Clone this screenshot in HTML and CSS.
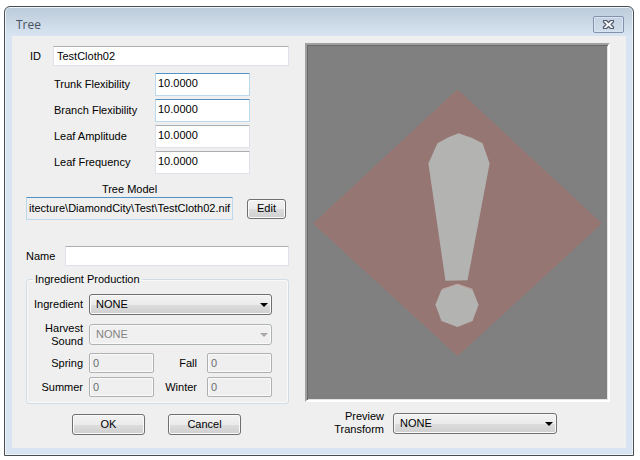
FILE: index.html
```html
<!DOCTYPE html>
<html lang="en">
<head>
<meta charset="utf-8">
<title>Tree</title>
<link rel="stylesheet" href="styles.css">
</head>
<body>
<main class="window">
  <header class="titlebar">
    <h1 class="title">Tree</h1>
    <button class="close" type="button" aria-label="Close">
      <svg width="13" height="11" viewBox="0 0 13 11" aria-hidden="true"><path d="M1.500 1.500h3l2 2 2-2h3v1.500l-2.500 2.500 2.500 2.500v1.500h-3l-2-2-2 2h-3V8L4 5.500 1.500 3z" fill="#fbfbfb" stroke="#525b70" stroke-width="1.200" stroke-linejoin="round"/></svg>
    </button>
  </header>
  <form class="client">
    <div class="left">
      <div class="row id-row">
        <label for="id">ID</label>
        <input class="text" id="id" type="text" value="TestCloth02">
      </div>
      <div class="flex-fields">
        <label for="trunk">Trunk Flexibility</label>
        <input class="text tall focus" id="trunk" type="text" value="10.0000">
        <label for="branch">Branch Flexibility</label>
        <input class="text tall focus" id="branch" type="text" value="10.0000">
        <label for="amp">Leaf Amplitude</label>
        <input class="text tall" id="amp" type="text" value="10.0000">
        <label for="freq">Leaf Frequency</label>
        <input class="text tall" id="freq" type="text" value="10.0000">
      </div>
      <label class="model-label" for="model">Tree Model</label>
      <div class="row model-row">
        <input class="text tall focus model" id="model" type="text" readonly value="itecture\DiamondCity\Test\TestCloth02.nif">
        <button class="btn edit" type="button">Edit</button>
      </div>
      <div class="row name-row">
        <label for="name">Name</label>
        <input class="text" id="name" type="text">
      </div>
      <fieldset class="group">
        <legend>Ingredient Production</legend>
        <div class="production">
          <label for="ingredient">Ingredient</label>
          <div class="combo"><select id="ingredient"><option>NONE</option></select></div>
          <label for="sound">Harvest<br>Sound</label>
          <div class="combo off"><select id="sound" disabled><option>NONE</option></select></div>
        </div>
        <div class="seasons">
          <label for="spring">Spring</label>
          <input class="text off" id="spring" type="text" value="0" disabled>
          <label for="fall">Fall</label>
          <input class="text off" id="fall" type="text" value="0" disabled>
          <label for="summer">Summer</label>
          <input class="text off" id="summer" type="text" value="0" disabled>
          <label for="winter">Winter</label>
          <input class="text off" id="winter" type="text" value="0" disabled>
        </div>
      </fieldset>
      <div class="row actions">
        <button class="btn" type="button">OK</button>
        <button class="btn" type="button">Cancel</button>
      </div>
    </div>
    <div class="right">
      <div class="preview">
        <svg viewBox="0 0 300 354" role="img" aria-label="Model preview">
          <path d="M150 44 294 178 150 310 6 178z" fill="#957673"/>
          <path d="M151 88 164 92.500 175 98 182 118 160 234.500 138 235 121 118 130 98 141 92z" fill="#b3b4b1"/>
          <path d="M150 238 165 244 171 259 165 275 150 281 134 275 128 259 134 244z" fill="#b3b4b1"/>
          <path d="M135 243.500 150 238.500 165 243.500" fill="none" stroke="#bfa3a0"/>
        </svg>
      </div>
      <div class="row transform">
        <label for="transform">Preview<br>Transform</label>
        <div class="combo"><select id="transform"><option>NONE</option></select></div>
      </div>
    </div>
  </form>
</main>
</body>
</html>
```
FILE: styles.css
```css
* {
  box-sizing: border-box;
}

body {
  margin: 0;
  padding: 6px 6px 5px 4px;
  background: #fff;
  color: #000;
  font: 11px/13px "Liberation Sans", Arial, sans-serif;
}

input,
select,
button {
  margin: 0;
  font: inherit;
  color: inherit;
  min-width: 0;
}

label {
  white-space: nowrap;
}

.window {
  padding: 0 7px 7px;
  border: 1px solid #4a4d52;
  border-radius: 6px 6px 0 0;
  background: linear-gradient(#bccbd9, #d8e4f1 29px);
  box-shadow: inset 0 0 0 1px #edf3fa;
}

.titlebar {
  display: flex;
  justify-content: space-between;
  align-items: center;
  height: 29px;
  padding: 6px 2px 0 4px;
}

.title {
  margin: 0;
  color: #45515f;
  font: 12px/16px "Open Sans", sans-serif;
}

.close {
  display: flex;
  align-items: center;
  justify-content: center;
  width: 31px;
  height: 17px;
  padding: 0;
  border: 1px solid #8492b0;
  border-radius: 2px;
  background: linear-gradient(#c4d2e1, #d0ddeb);
  box-shadow: inset 0 0 0 1px #d9e4f0;
}

.client {
  display: grid;
  grid-template-columns: 263fr 305fr;
  gap: 16px;
  padding: 7px 16px 12px 14px;
  background: #efefef;
}

.row {
  display: flex;
  align-items: center;
}

.left {
  display: flex;
  flex-direction: column;
  padding-top: 3px;
}

.text {
  width: 100%;
  height: 20px;
  padding: 0 3px;
  border: 1px solid #dfe2ea;
  border-top-color: #abadb3;
  border-radius: 1px;
  background: #fff;
}

.text.tall {
  height: 23px;
  padding: 0 2px 4px;
}

.text.focus {
  border-color: #bbd9ee;
  border-top-color: #5193c4;
}

.text.model {
  flex: 1;
  padding: 0 0 2px 2px;
  background: #efefef;
}

.text.off {
  border-color: #b0b0b0;
  border-radius: 2px;
  background: #efefef;
  box-shadow: inset 0 0 0 1px #fafafa;
  color: #6d6d6d;
}

.id-row {
  padding-left: 4px;
}

.id-row label {
  flex: 0 0 23px;
}

.flex-fields {
  display: grid;
  grid-template-columns: 101px 95px;
  align-items: center;
  gap: 3px 0;
  margin-top: 7px;
  padding-left: 28px;
}

.model-label {
  margin-top: 9px;
  padding-right: 56px;
  text-align: center;
}

.model-row {
  gap: 14px;
  margin-top: 1px;
  padding-right: 3px;
}

.name-row {
  margin-top: 26px;
}

.name-row label {
  flex: 0 0 39px;
}

.btn {
  width: 73px;
  height: 21px;
  padding: 0;
  border: 1px solid #707070;
  border-radius: 3px;
  background: linear-gradient(#f2f2f2, #ebebeb 50%, #dddddd 50%, #cfcfcf);
  box-shadow: inset 0 0 0 1px #fafafa;
}

.btn.edit {
  width: 39px;
  height: 20px;
}

.group {
  min-width: 0;
  margin: 7px 0 0;
  padding: 8px 16px 6px 4px;
  border: 1px solid #d0dce6;
  border-radius: 3px;
  box-shadow: inset 0 0 0 1px #fafafa;
}

.group legend {
  margin-left: 2px;
  padding: 0 2px;
}

.production,
.seasons {
  display: grid;
  align-items: center;
  text-align: right;
}

.production {
  grid-template-columns: 52px 1fr;
  gap: 9px 6px;
}

.seasons {
  grid-template-columns: 58px 1fr 53px 1fr;
  gap: 4px 0;
  margin-top: 8px;
}

.seasons label:nth-of-type(odd) {
  padding-right: 6px;
}

.seasons label:nth-of-type(even) {
  padding-right: 10px;
}

.combo {
  position: relative;
}

.combo select {
  display: block;
  width: 100%;
  height: 21px;
  padding: 0 6px;
  border: 1px solid #707070;
  border-radius: 3px;
  appearance: none;
  background: linear-gradient(#f2f2f2, #ebebeb 50%, #dddddd 50%, #cfcfcf);
  box-shadow: inset 0 0 0 1px #fafafa;
}

.combo::after {
  content: "";
  position: absolute;
  top: 9px;
  right: 4px;
  border: 4px solid transparent;
  border-top-color: #000;
  border-bottom: 0;
  pointer-events: none;
}

.combo.off select {
  border-color: #adb2b5;
  background: #f0f0f0;
  color: #838383;
  opacity: 1;
}

.combo.off::after {
  border-top-color: #a8a8a8;
}

.production label {
  margin: -3px 0;
}

.actions {
  gap: 23px;
  margin-top: 10px;
  padding-left: 46px;
}

.preview {
  border: 2px solid;
  border-color: #a0a0a0 #fff #fff #a0a0a0;
  background: #808080;
  box-shadow: inset 1px 1px 0 #696969, inset -1px -1px 0 #e3e3e3;
}

.preview svg {
  display: block;
  width: 100%;
}

.transform {
  justify-content: flex-end;
  gap: 9px;
  margin-top: 8px;
  padding-right: 53px;
  text-align: right;
}

.transform .combo {
  flex: 0 1 164px;
}
```
